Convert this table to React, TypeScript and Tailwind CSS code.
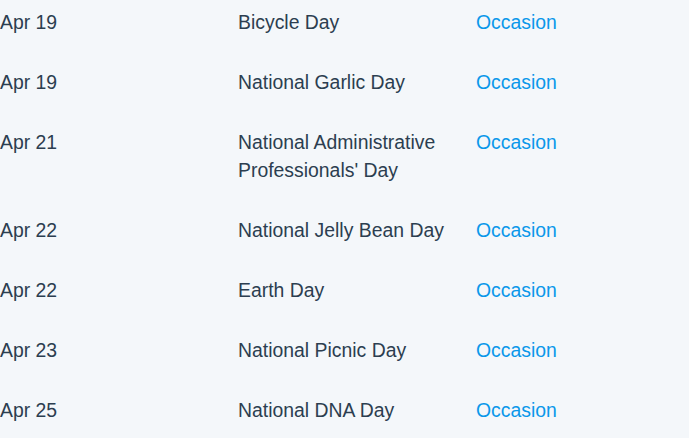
import React from "react";

type Holiday = { date: string; name: string };

const holidays: Holiday[] = [
  { date: "Apr 19", name: "Bicycle Day" },
  { date: "Apr 19", name: "National Garlic Day" },
  { date: "Apr 21", name: "National Administrative Professionals' Day" },
  { date: "Apr 22", name: "National Jelly Bean Day" },
  { date: "Apr 22", name: "Earth Day" },
  { date: "Apr 23", name: "National Picnic Day" },
  { date: "Apr 25", name: "National DNA Day" },
];

export default function App() {
  return (
    <main
      className="w-[689px] h-[438px] overflow-hidden bg-[#f4f7fa] pt-2 text-[19.4px] leading-[28px] text-[#2c3e50]"
      style={{ fontFamily: '"Liberation Sans", Arial, sans-serif' }}
    >
      <div className="flex flex-col gap-8">
        {holidays.map((h, i) => (
          <div key={i} className="grid grid-cols-[238px_238px_1fr]">
            <div className="pr-4">{h.date}</div>
            <div className="pr-4">{h.name}</div>
            <div>
              <a href="#" className="text-[#0a98ea]">
                Occasion
              </a>
            </div>
          </div>
        ))}
      </div>
    </main>
  );
}
